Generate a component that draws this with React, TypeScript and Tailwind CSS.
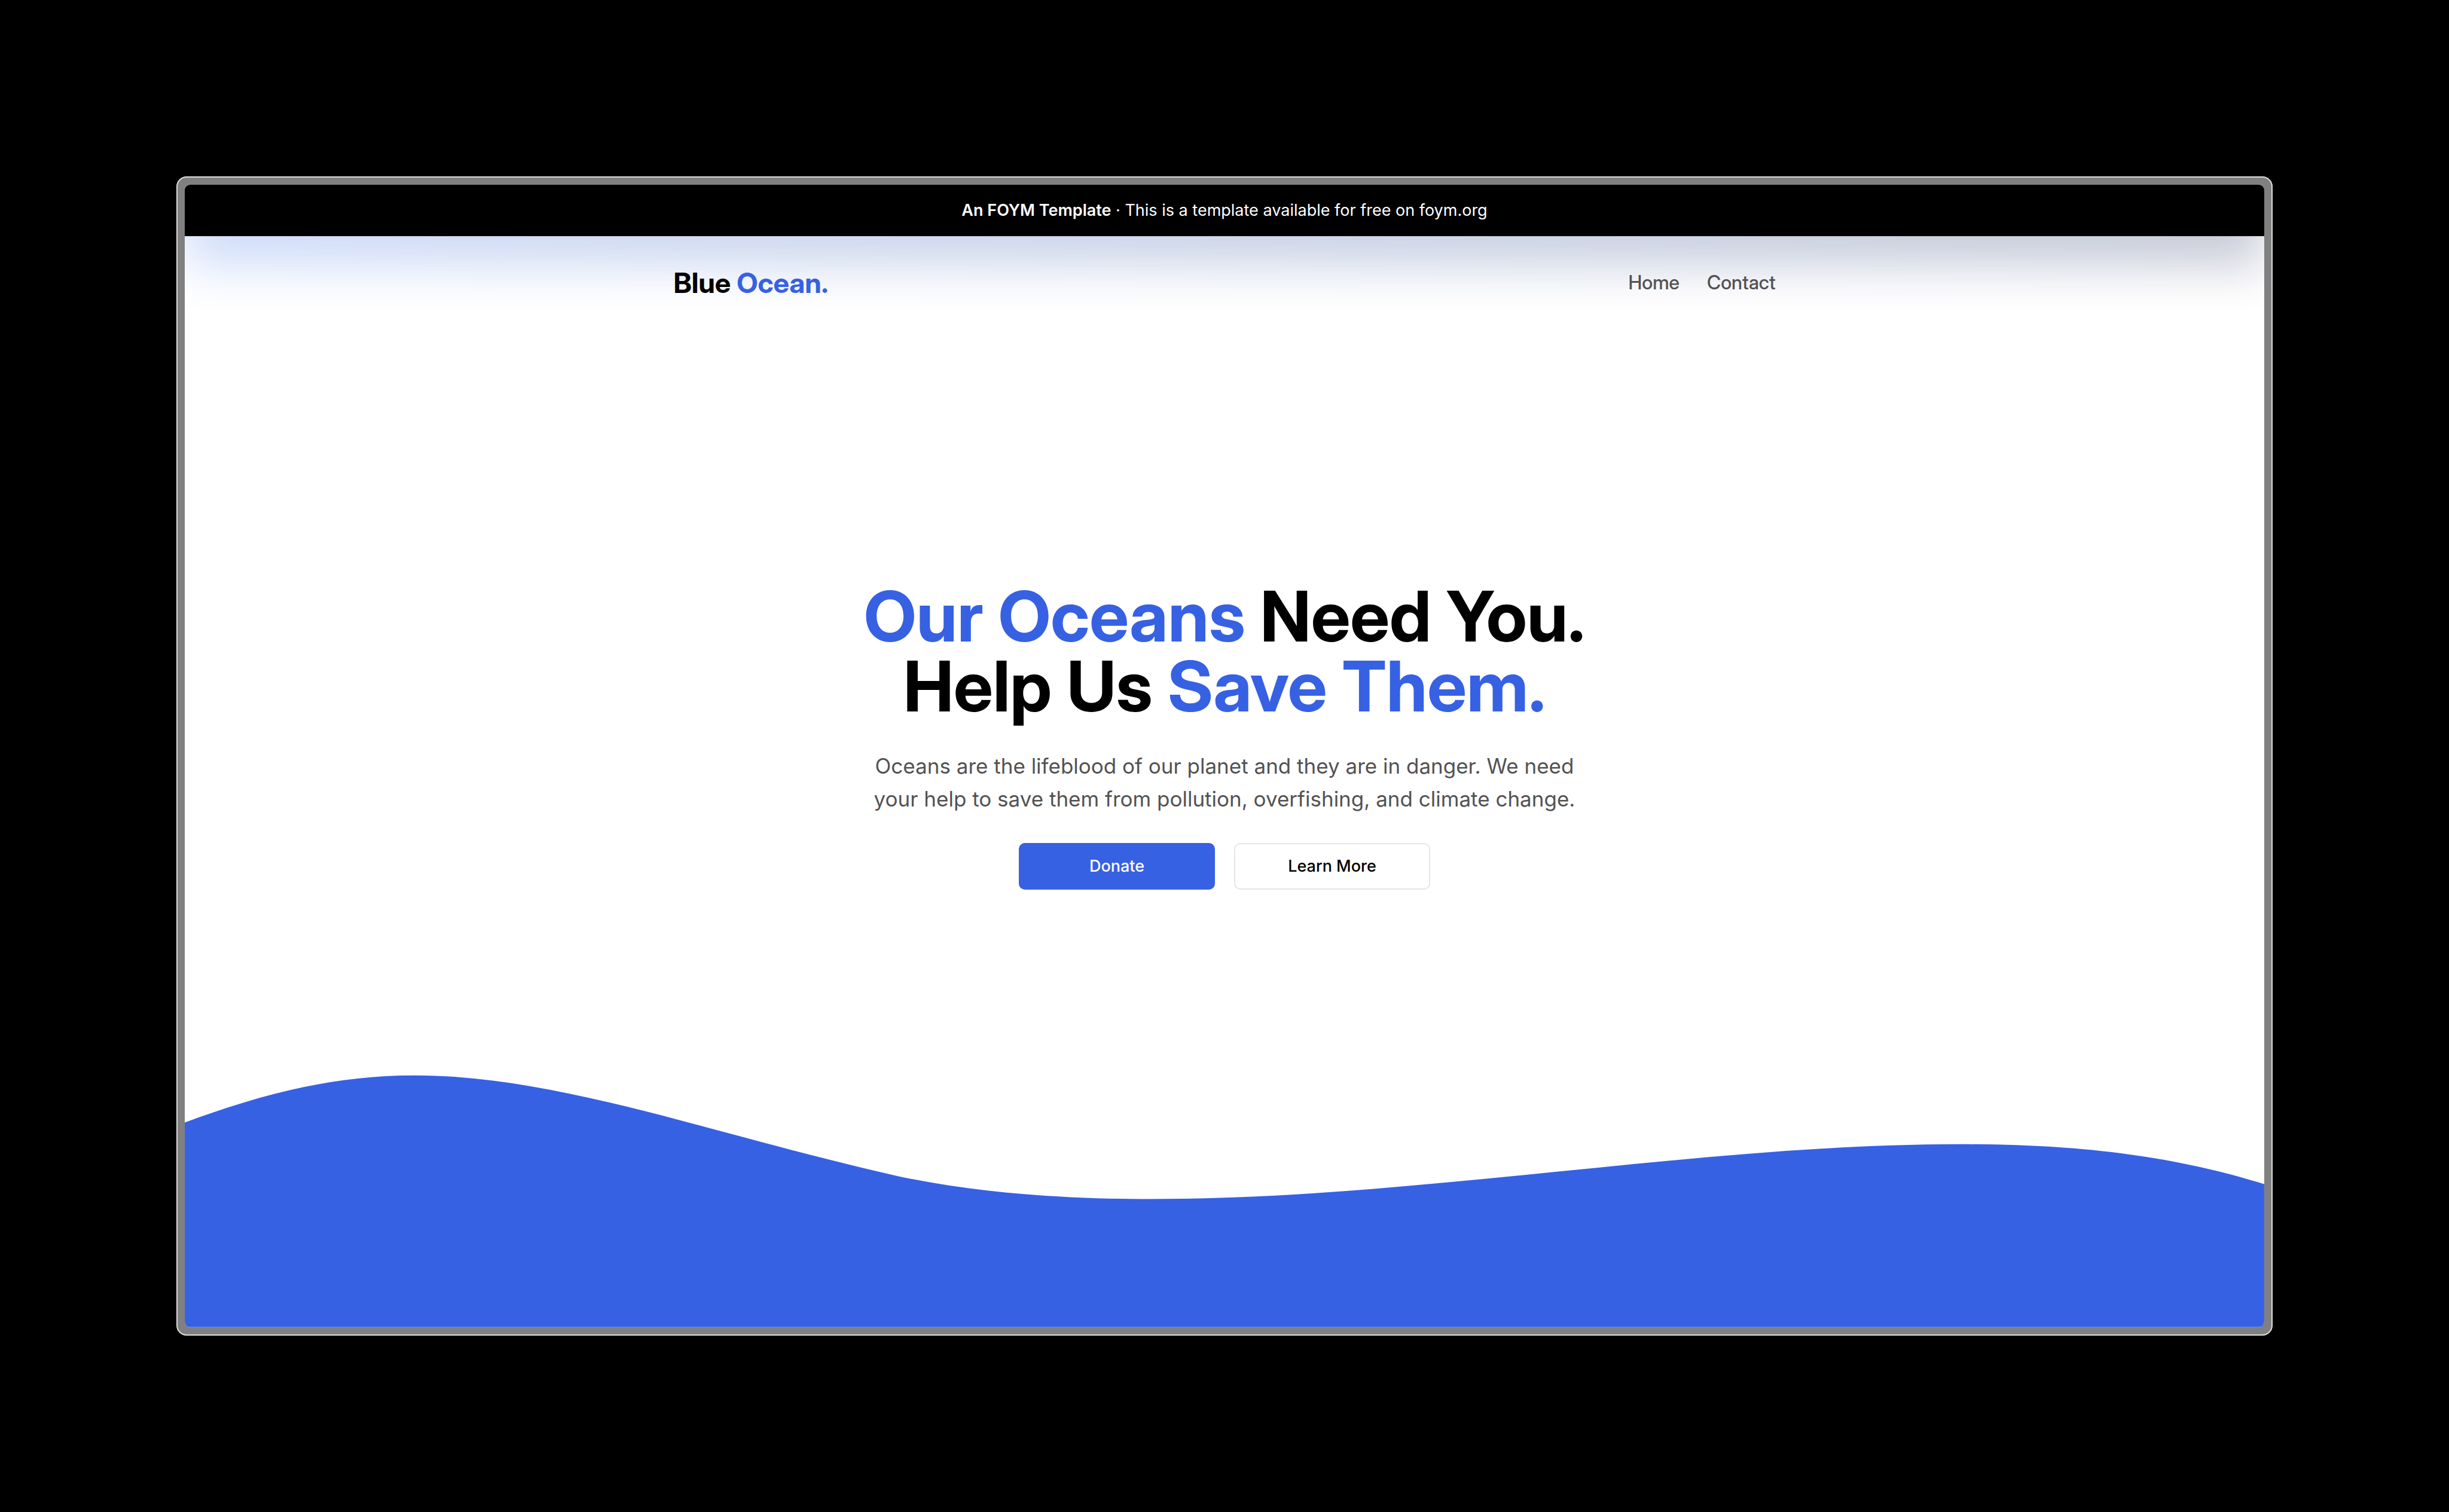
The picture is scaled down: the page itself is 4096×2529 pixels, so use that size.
export default function App() {
  return (
    <div className="flex min-h-screen bg-black p-[295px] font-['Inter',sans-serif]">
      <div className="flex flex-1 rounded-[17px] border-2 border-[#dcdcdc] bg-[#808080] p-3">
        <div className="relative isolate flex flex-1 flex-col overflow-hidden rounded-[9px] bg-white">
          <div className="z-10 bg-black py-6 text-center text-[27px] leading-[38px] text-white">
            <strong className="font-semibold">An FOYM Template</strong> · This is a template available for free on foym.org
          </div>
          <div
            aria-hidden="true"
            className="absolute inset-x-0 top-0 -z-10 h-[136px] bg-linear-to-r from-[#2a64e6] to-[#001048] opacity-22 blur-[40px]"
          />
          <header className="mx-auto flex w-full max-w-[1843px] items-center justify-between py-[43px] font-['Inter_Display','Inter',sans-serif]">
            <a href="#home" className="text-[47px] leading-[70px] font-bold text-black">
              Blue <span className="text-[#3761e3]">Ocean.</span>
            </a>
            <nav className="flex gap-[46px] text-[32px] font-medium text-[#525252]">
              <a href="#home">Home</a>
              <a href="#contact">Contact</a>
            </nav>
          </header>
          <main className="flex flex-1 flex-col items-center pt-[421px] text-center">
            <h1 className="font-['Inter_Display','Inter',sans-serif] text-[117px] leading-[117px] font-bold text-black">
              <span className="text-[#3761e3]">Our Oceans</span> Need You.
              <br />
              Help Us <span className="text-[#3761e3]">Save Them.</span>
            </h1>
            <p className="mt-12 text-[35px] leading-[55px] text-[#525252]">
              Oceans are the lifeblood of our planet and they are in danger. We need
              <br />
              your help to save them from pollution, overfishing, and climate change.
            </p>
            <div className="mt-[46px] flex gap-8">
              <button className="h-[78px] w-[328px] rounded-[10px] bg-[#3761e3] text-[27px] font-medium text-white">
                Donate
              </button>
              <button className="h-[78px] w-[328px] rounded-[10px] border-2 border-[#e5e5e5] bg-white text-[27px] font-medium text-black">
                Learn More
              </button>
            </div>
          </main>
          <svg viewBox="0 0 4320 530" className="w-full" aria-hidden="true">
            <path
              fill="#3761e3"
              d="M0,105C150,50 300,7 477,7C775,7 1090,128 1480,216C1650,253 1840,264 2006,264C2560,264 3150,150 3688,150C3960,150 4150,180 4320,233V530H0Z"
            />
          </svg>
        </div>
      </div>
    </div>
  );
}
